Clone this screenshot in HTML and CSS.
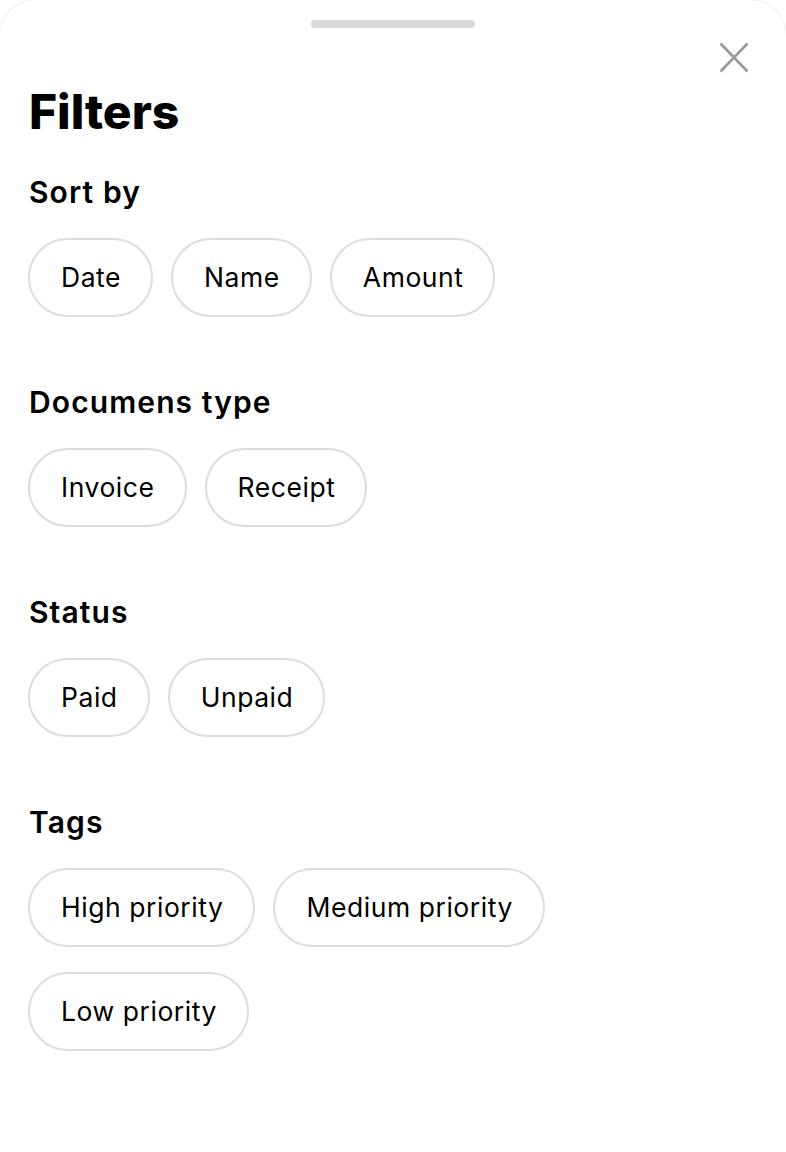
FILE: index.html
```html
<!DOCTYPE html>
<html lang="en">
<head>
<meta charset="utf-8">
<title>Filters</title>
<link rel="stylesheet" href="styles.css">
</head>
<body>
<div class="sheet">
  <div class="handle-row"><div class="handle"></div></div>
  <div class="close-row">
    <button class="close" aria-label="Close">
      <svg width="30" height="31" viewBox="0 0 30 31"><path d="M1.5 1.5 L28.5 29.5 M28.5 1.5 L1.5 29.5" stroke="#9a9a9a" stroke-width="2.6" fill="none"/></svg>
    </button>
  </div>
  <h1 class="title">Filters</h1>

  <section class="group">
    <h2 class="group-title">Sort by</h2>
    <div class="chips">
      <span class="chip">Date</span>
      <span class="chip">Name</span>
      <span class="chip">Amount</span>
    </div>
  </section>

  <section class="group">
    <h2 class="group-title">Documens type</h2>
    <div class="chips">
      <span class="chip">Invoice</span>
      <span class="chip">Receipt</span>
    </div>
  </section>

  <section class="group">
    <h2 class="group-title">Status</h2>
    <div class="chips">
      <span class="chip">Paid</span>
      <span class="chip">Unpaid</span>
    </div>
  </section>

  <section class="group">
    <h2 class="group-title">Tags</h2>
    <div class="chips">
      <span class="chip">High priority</span>
      <span class="chip">Medium priority</span>
      <span class="chip">Low priority</span>
    </div>
  </section>
</div>
</body>
</html>
```

FILE: styles.css
```css
* { box-sizing: border-box; }
html, body {
  margin: 0;
  padding: 0;
  background: #ffffff;
}
body {
  font-family: Inter, "Noto Sans", "Liberation Sans", sans-serif;
  color: #000;
}
.sheet {
  width: 786px;
  min-height: 1152px;
  background: #fff;
  border-radius: 36px 36px 0 0;
  box-shadow: 0 0 0 1px #efefef;
  padding: 20px 37px 40px 28px;
  display: flex;
  flex-direction: column;
}
.handle-row {
  display: flex;
  justify-content: center;
  margin-left: -28px;
  margin-right: -37px;
}
.handle {
  width: 164px;
  height: 8px;
  border-radius: 4px;
  background: #d9d9d9;
}
.close-row {
  display: flex;
  justify-content: flex-end;
  margin-top: 14px;
}
.close {
  width: 30px;
  height: 31px;
  padding: 0;
  border: 0;
  background: none;
  display: block;
}
.close svg { display: block; }
.title {
  margin: 10px 0 0 1px;
  font-size: 48px;
  line-height: 58px;
  font-weight: 800;
  letter-spacing: 0;
}
.group { margin-top: 34px; }
.group + .group { margin-top: 68px; }
.group-title {
  margin: 0 0 0 1px;
  font-size: 30px;
  line-height: 34px;
  font-weight: 600;
  letter-spacing: 1.1px;
}
.chips {
  margin-top: 29px;
  display: flex;
  flex-wrap: wrap;
  column-gap: 18px;
  row-gap: 25px;
}
.chip {
  display: inline-block;
  height: 79px;
  line-height: 75px;
  padding: 0 30px 0 31px;
  border: 2px solid #dddddd;
  border-radius: 40px;
  font-size: 26.5px;
  font-weight: 400;
  letter-spacing: 0.55px;
  color: #000;
}
```
